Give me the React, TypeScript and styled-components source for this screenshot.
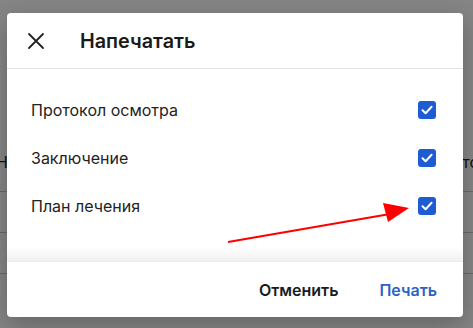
import React, { useState } from 'react';
import styled, { createGlobalStyle } from 'styled-components';

const GlobalStyle = createGlobalStyle`
  html, body {
    margin: 0;
    padding: 0;
    width: 473px;
    height: 328px;
    overflow: hidden;
    font-family: Inter, "Noto Sans", sans-serif;
  }
`;

const Page = styled.div`
  width: 473px;
  height: 328px;
  background: #fff;
  position: relative;
  overflow: hidden;
`;

const Table = styled.div`
  padding-top: 133px;
  display: flex;
  flex-direction: column;
`;

const TableRow = styled.div<{ $tall?: boolean }>`
  height: ${p => (p.$tall ? 58 : 40)}px;
  border-bottom: 1px solid #c8c8c8;
  display: flex;
  align-items: center;
  justify-content: space-between;
  font-size: 16px;
  color: #222;
`;

const Cell = styled.span<{ $left?: number; $right?: number }>`
  margin-left: ${p => p.$left ?? 0}px;
  margin-right: ${p => p.$right ?? 0}px;
  white-space: nowrap;
`;

const Overlay = styled.div`
  position: absolute;
  inset: 0;
  background: rgba(0, 0, 0, 0.48);
`;

const Dialog = styled.div`
  position: absolute;
  left: 7px;
  top: 13px;
  width: 456px;
  height: 304px;
  background: #fff;
  border-radius: 4px;
  box-shadow: 0 8px 24px rgba(0, 0, 0, 0.25);
  display: flex;
  flex-direction: column;
  overflow: hidden;
`;

const Header = styled.div`
  height: 55px;
  border-bottom: 1px solid #e2e2e2;
  display: flex;
  align-items: center;
  padding-left: 18px;
  gap: 33px;
  flex-shrink: 0;
`;

const CloseButton = styled.button`
  width: 22px;
  height: 22px;
  padding: 0;
  border: none;
  background: none;
  display: flex;
  align-items: center;
  justify-content: center;
  cursor: pointer;
`;

const Title = styled.h2`
  margin: 0;
  font-size: 19.8px;
  font-weight: 600;
  color: #1a1a1a;
`;

const Body = styled.div`
  flex: 1;
  padding: 17px 27px 0 24px;
  display: flex;
  flex-direction: column;
  position: relative;
`;

const Option = styled.label`
  height: 48px;
  display: flex;
  align-items: center;
  justify-content: space-between;
  font-size: 16px;
  color: #222;
  cursor: pointer;
`;

const Box = styled.span<{ $on: boolean }>`
  width: 18px;
  height: 18px;
  border-radius: 3px;
  background: ${p => (p.$on ? '#1f5cd1' : '#fff')};
  border: ${p => (p.$on ? 'none' : '2px solid #777')};
  display: flex;
  align-items: center;
  justify-content: center;
`;

const ScrollShade = styled.div`
  position: absolute;
  left: 0;
  right: 0;
  bottom: 0;
  height: 14px;
  background: linear-gradient(to bottom, rgba(0, 0, 0, 0), rgba(0, 0, 0, 0.06));
`;

const Footer = styled.div`
  height: 55px;
  flex-shrink: 0;
  display: flex;
  align-items: center;
  justify-content: flex-end;
  padding-right: 26px;
  gap: 41px;
  border-top: 1px solid #ececec;
`;

const Action = styled.button<{ $primary?: boolean }>`
  border: none;
  background: none;
  padding: 0;
  font-family: inherit;
  font-size: 16px;
  font-weight: 600;
  color: ${p => (p.$primary ? '#2d62c4' : '#1a1a1a')};
  cursor: pointer;
`;

const Arrow = styled.svg`
  position: absolute;
  left: 0;
  top: 0;
  pointer-events: none;
`;

const items = ['Протокол осмотра', 'Заключение', 'План лечения'];

export default function App() {
  const [checked, setChecked] = useState([true, true, true]);

  return (
    <Page>
      <GlobalStyle />
      <Table>
        <TableRow $tall>
          <Cell $left={-4}>Н</Cell>
          <Cell $right={-6}>то</Cell>
        </TableRow>
        <TableRow />
        <TableRow />
      </Table>
      <Overlay />
      <Dialog>
        <Header>
          <CloseButton aria-label="Закрыть">
            <svg width="18" height="18" viewBox="0 0 18 18">
              <path d="M2 2 L16 16 M16 2 L2 16" stroke="#222" strokeWidth="1.8" strokeLinecap="round" />
            </svg>
          </CloseButton>
          <Title>Напечатать</Title>
        </Header>
        <Body>
          {items.map((label, i) => (
            <Option
              key={label}
              onClick={() => setChecked(c => c.map((v, j) => (j === i ? !v : v)))}
            >
              {label}
              <Box $on={checked[i]}>
                {checked[i] && (
                  <svg width="14" height="14" viewBox="0 0 14 14">
                    <path d="M2.5 7.3 L5.6 10.2 L11.6 3.8" fill="none" stroke="#fff" strokeWidth="2" strokeLinecap="round" strokeLinejoin="round" />
                  </svg>
                )}
              </Box>
            </Option>
          ))}
          <ScrollShade />
        </Body>
        <Footer>
          <Action>Отменить</Action>
          <Action $primary>Печать</Action>
        </Footer>
      </Dialog>
      <Arrow width="473" height="328" viewBox="0 0 473 328">
        <line x1="228" y1="242" x2="390" y2="214" stroke="#f00" strokeWidth="2.2" />
        <polygon points="409,208 383,203 388,222" fill="#f00" />
      </Arrow>
    </Page>
  );
}
